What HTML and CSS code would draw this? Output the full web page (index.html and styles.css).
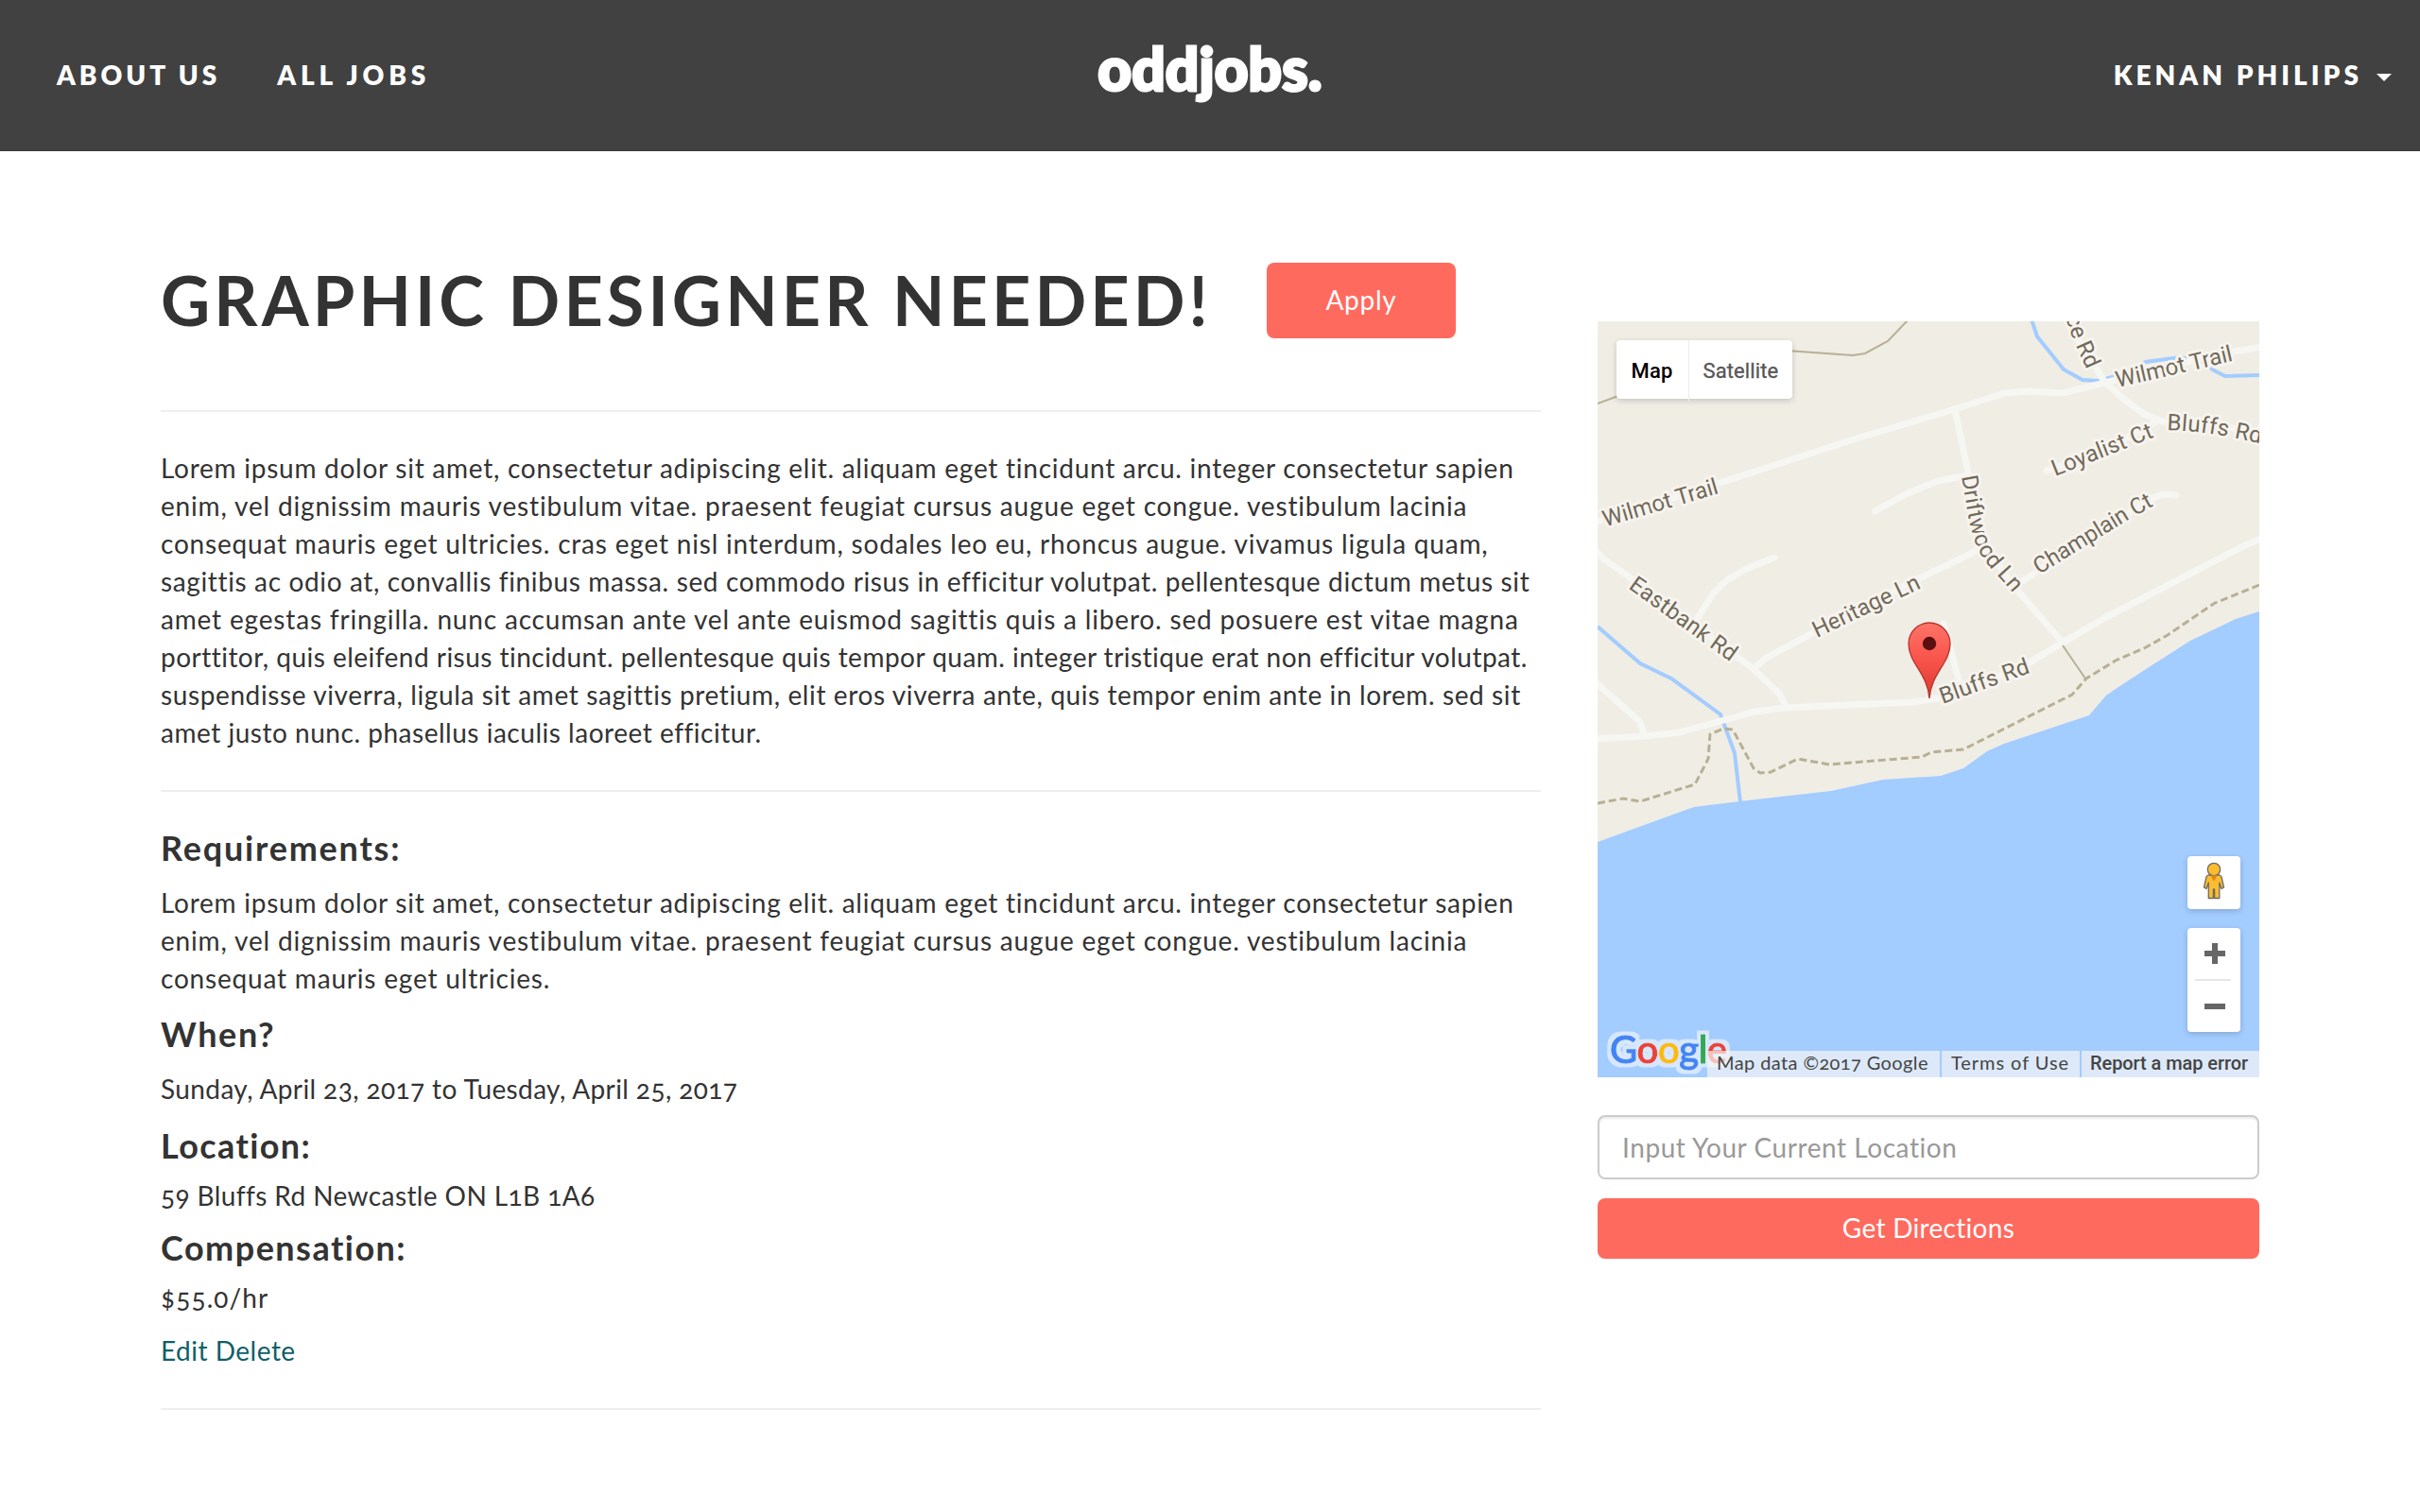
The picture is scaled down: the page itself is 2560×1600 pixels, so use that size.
FILE: index.html
```
<!DOCTYPE html>
<html lang="en">
<head>
<meta charset="utf-8">
<title>oddjobs.</title>
<link rel="stylesheet" href="styles.css">
</head>
<body>
<header class="navbar">
  <nav class="nav-links">
    <a class="nav-link nav-about">About us</a>
    <a class="nav-link nav-jobs">All jobs</a>
  </nav>
  <a class="brand">oddjobs.</a>
  <div class="nav-user">
    <a class="nav-link nav-name">Kenan Philips</a>
    <span class="caret"></span>
  </div>
</header>

<main class="page">
  <section class="job">
    <div class="job-head">
      <h1 class="job-title">GRAPHIC DESIGNER NEEDED!</h1>
      <a class="btn btn-apply">Apply</a>
    </div>
    <hr class="rule">
    <p class="text description">
      <span class="line t1">Lorem ipsum dolor sit amet, consectetur adipiscing elit. aliquam eget tincidunt arcu. integer consectetur sapien</span>
      <span class="line t2">enim, vel dignissim mauris vestibulum vitae. praesent feugiat cursus augue eget congue. vestibulum lacinia</span>
      <span class="line t3">consequat mauris eget ultricies. cras eget nisl interdum, sodales leo eu, rhoncus augue. vivamus ligula quam,</span>
      <span class="line t4">sagittis ac odio at, convallis finibus massa. sed commodo risus in efficitur volutpat. pellentesque dictum metus sit</span>
      <span class="line t5">amet egestas fringilla. nunc accumsan ante vel ante euismod sagittis quis a libero. sed posuere est vitae magna</span>
      <span class="line t6">porttitor, quis eleifend risus tincidunt. pellentesque quis tempor quam. integer tristique erat non efficitur volutpat.</span>
      <span class="line t7">suspendisse viverra, ligula sit amet sagittis pretium, elit eros viverra ante, quis tempor enim ante in lorem. sed sit</span>
      <span class="line t8">amet justo nunc. phasellus iaculis laoreet efficitur.</span>
    </p>
    <hr class="rule">
    <h3 class="label label-req">Requirements:</h3>
    <p class="text requirements">
      <span class="line t1">Lorem ipsum dolor sit amet, consectetur adipiscing elit. aliquam eget tincidunt arcu. integer consectetur sapien</span>
      <span class="line t2">enim, vel dignissim mauris vestibulum vitae. praesent feugiat cursus augue eget congue. vestibulum lacinia</span>
      <span class="line t3">consequat mauris eget ultricies.</span>
    </p>
    <h3 class="label label-when">When?</h3>
    <p class="text when">Sunday, April 23, 2017 to Tuesday, April 25, 2017</p>
    <h3 class="label label-loc">Location:</h3>
    <p class="text location">59 Bluffs Rd Newcastle ON L1B 1A6</p>
    <h3 class="label label-comp">Compensation:</h3>
    <p class="text pay">$55.0/hr</p>
    <p class="text actions"><a class="link">Edit</a> <a class="link">Delete</a></p>
    <hr class="rule">
  </section>

  <aside class="side">
    <div class="map">
      <svg class="map-canvas" viewBox="0 0 700 800" width="700" height="800">
        <defs>
          <linearGradient id="pin" x1="0" y1="0" x2="0" y2="1">
            <stop offset="0" stop-color="#ff7468"/><stop offset=".5" stop-color="#f8534a"/><stop offset="1" stop-color="#d8392f"/>
          </linearGradient>
          <filter id="halo" x="-10%" y="-20%" width="120%" height="150%">
            <feMorphology in="SourceAlpha" operator="dilate" radius="3.500" result="fat"/>
            <feGaussianBlur in="fat" stdDeviation=".6" result="soft"/>
            <feFlood flood-color="#d7e7fc"/>
            <feComposite in2="soft" operator="in" result="glow"/>
            <feMerge><feMergeNode in="glow"/><feMergeNode in="SourceGraphic"/></feMerge>
          </filter>
          <path id="p-wilmot1" d="M8,217.500 L135,180"/>
          <path id="p-eastbank" d="M32,282 L144,363"/>
          <path id="p-heritage" d="M232,335 L347,280"/>
          <path id="p-wilmot2" d="M550,70 L680,40"/>
          <path id="p-ce" d="M495,-4 L503,19 L525,68"/>
          <path id="p-bluffs1" d="M602.500,115 Q650,116 712,132"/>
          <path id="p-loyalist" d="M484,164 L595,120"/>
          <path id="p-champlain" d="M467,268 L560,211 L594,192"/>
          <path id="p-driftwood" d="M385,164 C391,194 392,220 404,244 C412,260 428,272 446,296"/>
          <path id="p-bluffs2" d="M365,405 L463,370"/>
        </defs>
        <rect class="land" width="700" height="800"/>
        <path class="water" d="M0,551 L102,514 L150,508 L247,497 L302,485 L363,481 L387,473 L412,455 L430,447 L520,417 L537,397 Q541,393 627,338 L675,315 L700,307 V800 H0 Z"/>
        <g class="stream">
          <path d="M0,323 L45,362 L78,378 L130,416 L145,457 L151,509"/>
          <path d="M459,-2 L465,16 L493,51 L513,62 L530,63 L552,57 L580,43 L617,38 L640,43 L652,52 L664,58 L700,57"/>
        </g>
        <g class="road">
          <path d="M0,212 L80,187 L277,123 L378,93 L430,76 L457,74 L492,76 L537,65 L600,48 L673,32 L704,27"/>
          <path d="M293,201 L328,182 L360,169 L392,163"/>
          <path d="M378,93 L392,160 L403,217 L412,240 L440,280 L492,340"/>
          <path d="M165,368 L177,357 L227,330 L340,272 L403,242"/>
          <path d="M-2,243 L7,252 L37,273 L150,357 L165,368 L193,395 L200,409"/>
          <path d="M105,315 L123,287 L138,273 L157,262 L187,250"/>
          <path d="M-2,382 L43,422 Q48,428 49,438"/>
          <path d="M-4,442 L50,439 L87,435 L130,423 L167,413 L197,409 L333,403 L360,399 L410,382 L457,361 L492,340 L540,312 L683,238 L704,229"/>
          <path d="M366,320 L385,390"/>
          <path d="M490,-10 L537,65 Q560,86 578,98 L597,106 L650,108 L704,120"/>
          <path d="M475,158 L490,153 L560,123 L590,107"/>
          <path d="M450,275 L467,263 L587,187 L598,183 L612,184"/>
        </g>
        <g class="trail">
          <path d="M0,87 L30,76"/>
          <path d="M200,31 L270,36 L283,34 L307,21 L328,-1"/>
          <path d="M492,343 L516,378"/>
        </g>
        <path class="trail dashed" d="M0,510 L27,505 L45,508 L103,490 L117,463 L119,437 L133,431 L143,432 L165,473 L172,478 L183,477 L212,463 L245,469 L343,461 L353,456 L387,453 L492,400 L502,395 L517,378 L548,359 L580,345 L603,332 L653,298 L700,279"/>
        <g class="street">
          <text><textPath href="#p-wilmot1" textLength="126">Wilmot Trail</textPath></text>
          <text><textPath href="#p-eastbank" textLength="134">Eastbank Rd</textPath></text>
          <text><textPath href="#p-heritage" textLength="123">Heritage Ln</textPath></text>
          <text><textPath href="#p-wilmot2" textLength="126">Wilmot Trail</textPath></text>
          <text><textPath href="#p-ce">ce Rd</textPath></text>
          <text><textPath href="#p-bluffs1" textLength="100">Bluffs Rd</textPath></text>
          <text><textPath href="#p-loyalist" textLength="113">Loyalist Ct</textPath></text>
          <text><textPath href="#p-champlain" textLength="142">Champlain Ct</textPath></text>
          <text><textPath href="#p-driftwood" textLength="139">Driftwood Ln</textPath></text>
          <text><textPath href="#p-bluffs2" textLength="99">Bluffs Rd</textPath></text>
        </g>
        <path d="M351,399 C349,372 329,362 329,341 A22,22 0 0 1 373,341 C373,362 353,372 351,399 Z" fill="url(#pin)" stroke="#b5332c" stroke-width="1.3"/>
        <circle cx="351" cy="341" r="7.2" fill="#5b0f0e"/>
        <text class="logo" x="13" y="785" textLength="124" filter="url(#halo)"><tspan class="g-blue">G</tspan><tspan class="g-red">o</tspan><tspan class="g-yellow">o</tspan><tspan class="g-blue">g</tspan><tspan class="g-green">l</tspan><tspan class="g-red">e</tspan></text>
      </svg>
      <div class="map-type">
        <span class="map-type-item is-active">Map</span>
        <span class="map-type-item">Satellite</span>
      </div>
      <div class="map-tools">
        <div class="tool pegman">
          <svg width="56" height="56" viewBox="0 0 56 56">
            <g fill="#fbbc2e" stroke="#6d6a66" stroke-width="1.3" stroke-linejoin="round">
              <path d="M22,20 H34 Q35.500,20.500 36,22 L38.500,33 L36,34.500 L33.800,28 V44.500 H28.600 V35 H27.400 V44.500 H22.300 V28 L20,34.500 L17.500,33 L20,22 Q20.500,20.500 22,20 Z"/>
              <circle cx="28" cy="14" r="6.700"/>
            </g>
            <path d="M24.300,20.300 H31.700 L28,26.500 Z" fill="#e3831c"/>
          </svg>
        </div>
        <div class="tool zoom">
          <svg width="56" height="110" viewBox="0 0 56 110">
            <path d="M18,27 H40 M29,16 V38 M18,83 H40" stroke="#666" stroke-width="6"/>
            <path d="M8,55 H46" stroke="#e6e6e6" stroke-width="2"/>
          </svg>
        </div>
      </div>
      <div class="map-credits">
        <span class="credit credit-data">Map data ©2017 Google</span>
        <span class="credit credit-terms">Terms of Use</span>
        <span class="credit credit-report">Report a map error</span>
      </div>
    </div>
    <input class="field" type="text" placeholder="Input Your Current Location">
    <a class="btn btn-directions">Get Directions</a>
  </aside>
</main>
</body>
</html>
```
FILE: styles.css
```
* { box-sizing: border-box; }
body {
  margin: 0;
  background: #fff;
  color: #333;
  font: 28px/40px Lato, "Open Sans", sans-serif;
  font-variant-numeric: oldstyle-nums;
}
h1, h3, p { margin: 0; }

.navbar {
  display: grid;
  grid-template-columns: 1fr auto 1fr;
  align-items: start;
  height: 160px;
  padding: 0 30px 0 60px;
  background: #414141;
  border-bottom: 1px solid #3a3a3a;
}
.nav-links { display: flex; gap: 60px; margin-top: 59px; }
.nav-link {
  color: #fff;
  font-weight: 800;
  text-transform: uppercase;
  white-space: nowrap;
}
.nav-about { letter-spacing: 3.95px; }
.nav-jobs { letter-spacing: 4.8px; }
.nav-name { letter-spacing: 4.05px; }
.brand {
  margin: 35px 0 0 -30px;
  color: #fff;
  font-weight: 900;
  font-size: 62px;
  line-height: 75px;
  letter-spacing: .15px;
  -webkit-text-stroke: 3px #fff;
}
.nav-user {
  display: flex;
  justify-content: flex-end;
  align-items: center;
  gap: 15px;
  margin-top: 59px;
}
.caret {
  margin-top: 6px;
  border: 8px solid transparent;
  border-top-color: #fff;
  border-bottom: 0;
}

.page {
  display: grid;
  grid-template-columns: 1460px 700px;
  column-gap: 60px;
  padding: 118px 0 0 170px;
}
.job-head { display: flex; align-items: flex-start; height: 80px; margin-bottom: 76px; }
.job-title {
  flex: 0 0 1170px;
  font-size: 72px;
  line-height: 78px;
  font-weight: 700;
  letter-spacing: 4.06px;
  white-space: nowrap;
}
.btn {
  display: block;
  background: #ff6a5e;
  border-radius: 8px;
  color: #fff;
  text-align: center;
}
.btn-apply { width: 200px; height: 80px; line-height: 79px; letter-spacing: .75px; }
.rule { height: 2px; margin: 0; border: 0; background: #eee; }

.text { white-space: nowrap; }
.line { display: block; }
.description { margin: 39px 0 41px; }
.t1 { letter-spacing: .742px; }
.t2 { letter-spacing: .83px; }
.t3 { letter-spacing: .808px; }
.t4 { letter-spacing: .635px; }
.t5 { letter-spacing: .824px; }
.t6 { letter-spacing: .477px; }
.t7 { letter-spacing: .61px; }
.t8 { letter-spacing: .523px; }

.label { font-size: 36px; line-height: 44px; font-weight: 700; }
.label-req { margin-top: 37px; letter-spacing: 1.78px; }
.requirements { margin: 16px 0 17px; }
.label-when { letter-spacing: 1.6px; }
.when { margin: 16px 0 18px; letter-spacing: .39px; }
.label-loc { letter-spacing: 1.4px; }
.location { margin: 11px 0 13px; letter-spacing: .4px; }
.label-comp { letter-spacing: 1.48px; }
.pay { margin: 11px 0 16px; letter-spacing: 1.1px; }
.actions { margin-bottom: 41px; letter-spacing: .5px; }
.link { color: #0f5f68; }

.side { padding-top: 62px; }
.map { position: relative; height: 800px; overflow: hidden; }
.map-canvas { display: block; }
.land { fill: #f0ede5; }
.water { fill: #a3ccff; }
.stream { fill: none; stroke: #a3ccff; stroke-width: 4; }
.road { fill: none; stroke: #f6f6f3; stroke-width: 7; stroke-linecap: round; stroke-linejoin: round; }
.trail { fill: none; stroke: #b8b095; stroke-width: 2; }
.dashed { stroke-width: 3; stroke-dasharray: 8 4; }
.street {
  font: 24px Roboto, sans-serif;
  font-variant-numeric: normal;
  fill: #6f6959;
  stroke: #f7f3ee;
  stroke-width: 6px;
  stroke-linejoin: round;
  paint-order: stroke;
}
.logo { font: 500 40px Lato, sans-serif; stroke-width: 1px; }
.g-blue { fill: #4285f4; stroke: #4285f4; }
.g-red { fill: #ea4335; stroke: #ea4335; }
.g-yellow { fill: #fbbc05; stroke: #fbbc05; }
.g-green { fill: #34a853; stroke: #34a853; }

.map-type {
  position: absolute;
  top: 20px;
  left: 20px;
  display: grid;
  grid-template-columns: 76px 110px;
  height: 62px;
  border-radius: 4px;
  background: #fff;
  box-shadow: 0 2px 6px rgba(0, 0, 0, .18);
  font: 500 22px/65px Roboto, sans-serif;
  color: #565656;
}
.map-type-item { padding-left: 14.5px; border-left: 1px solid #ececec; font-weight: 400; letter-spacing: .1px; -webkit-text-stroke: .3px #565656; }
.map-type-item.is-active { padding-left: 15.5px; border-left: 0; color: #000; font-weight: 500; letter-spacing: .25px; -webkit-text-stroke: 0; }
.map-tools {
  position: absolute;
  top: 566px;
  right: 20px;
  display: grid;
  gap: 20px;
}
.tool { background: #fff; border-radius: 4px; box-shadow: 0 2px 6px rgba(0, 0, 0, .18); }
.tool svg { display: block; }
.map-credits {
  position: absolute;
  right: 0;
  bottom: 0;
  display: grid;
  grid-template-columns: 246px 146px 188px;
  gap: 2px;
  height: 28px;
  font-size: 20px;
  line-height: 24px;
  color: #444;
  white-space: nowrap;
}
.credit { padding-left: 10px; background: rgba(245, 245, 245, .7); }
.credit-data { letter-spacing: .4px; }
.credit-terms { letter-spacing: .94px; }
.credit-report { padding-left: 9px; font-family: Roboto, sans-serif; font-weight: 500; letter-spacing: -.07px; line-height: 26px; }

.field {
  display: block;
  width: 100%;
  height: 68px;
  margin: 40px 0 20px;
  padding: 0 24px;
  border: 2px solid #ccc;
  border-radius: 8px;
  box-shadow: inset 0 2px 2px rgba(0, 0, 0, .075);
  font: inherit;
  letter-spacing: .562px;
}
.field::placeholder { color: #999; opacity: 1; }
.btn-directions { height: 64px; line-height: 62px; letter-spacing: .3px; }
```
